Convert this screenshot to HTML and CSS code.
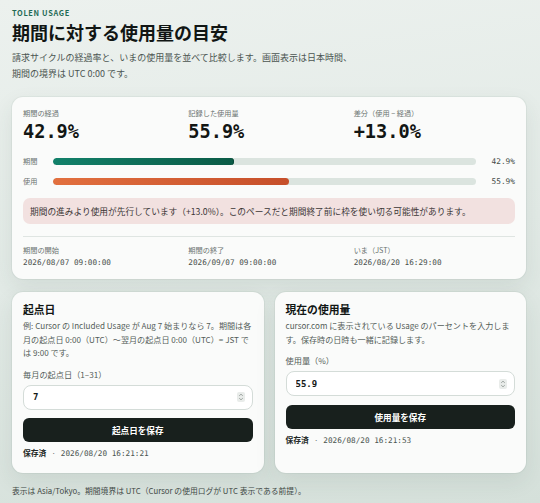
FILE: index.html
```html
<!DOCTYPE html>
<html lang="ja">
<head>
  <meta charset="UTF-8" />
  <meta name="viewport" content="width=device-width, initial-scale=1.0"/>
  <title>Tolen Usage</title>
  <link rel="stylesheet" href="styles.css">
</head>
<body>
  <div class="page">
    <header class="intro">
      <div class="eyebrow">TOLEN USAGE</div>
      <h1>期間に対する使用量の目安</h1>
      <p class="lead">請求サイクルの経過率と、いまの使用量を並べて比較します。画面表示は日本時間、<br>期間の境界は UTC 0:00 です。</p>
    </header>

    <section class="card summary">
      <div class="cols stats">
        <div>
          <div class="label">期間の経過</div>
          <div class="big">42.9%</div>
        </div>
        <div>
          <div class="label">記録した使用量</div>
          <div class="big">55.9%</div>
        </div>
        <div>
          <div class="label">差分（使用 − 経過）</div>
          <div class="big">+13.0%</div>
        </div>
      </div>

      <div class="bars">
        <div class="bar-row">
          <span class="label">期間</span>
          <div class="track"><div class="fill time" style="width: 42.9%"></div></div>
          <span class="pct">42.9%</span>
        </div>
        <div class="bar-row">
          <span class="label">使用</span>
          <div class="track"><div class="fill usage" style="width: 55.9%"></div></div>
          <span class="pct">55.9%</span>
        </div>
      </div>

      <div class="alert">期間の進みより使用が先行しています（+13.0%）。このペースだと期間終了前に枠を使い切る可能性があります。</div>

      <div class="cols meta">
        <div>
          <div class="label">期間の開始</div>
          <div class="mono">2026/08/07 09:00:00</div>
        </div>
        <div>
          <div class="label">期間の終了</div>
          <div class="mono">2026/09/07 09:00:00</div>
        </div>
        <div>
          <div class="label">いま（JST）</div>
          <div class="mono">2026/08/20 16:29:00</div>
        </div>
      </div>
    </section>

    <div class="forms">
      <section class="card form-card">
        <h2>起点日</h2>
        <p class="help">例: Cursor の Included Usage が Aug 7 始まりなら 7。期間は各月の起点日 0:00（UTC）〜翌月の起点日 0:00（UTC）= JST では 9:00 です。</p>
        <label class="field-label" for="startDay">毎月の起点日（1–31）</label>
        <div class="field">
          <input type="number" id="startDay" value="7" min="1" max="31">
          <svg class="spin" viewBox="0 0 8 10"><path d="M2.2 3.8 4 2.2 5.8 3.8M2.2 6.2 4 7.8 5.8 6.2"/></svg>
        </div>
        <button class="btn">起点日を保存</button>
        <div class="saved"><b>保存済</b><span class="dot">·</span><span class="mono">2026/08/20 16:21:21</span></div>
      </section>

      <section class="card form-card">
        <h2>現在の使用量</h2>
        <p class="help">cursor.com に表示されている Usage のパーセントを入力します。保存時の日時も一緒に記録します。</p>
        <label class="field-label" for="usage">使用量（%）</label>
        <div class="field">
          <input type="number" id="usage" value="55.9" step="0.1">
          <svg class="spin" viewBox="0 0 8 10"><path d="M2.2 3.8 4 2.2 5.8 3.8M2.2 6.2 4 7.8 5.8 6.2"/></svg>
        </div>
        <button class="btn">使用量を保存</button>
        <div class="saved"><b>保存済</b><span class="dot">·</span><span class="mono">2026/08/20 16:21:53</span></div>
      </section>
    </div>

    <p class="footnote">表示は Asia/Tokyo。期間境界は UTC（Cursor の使用ログが UTC 表示である前提）。</p>
  </div>
</body>
</html>
```

FILE: styles.css
```css
body {
  margin: 0;
  min-height: 100vh;
  font-family: "Noto Sans CJK JP", "Noto Sans", sans-serif;
  color: #151a18;
  background: linear-gradient(172deg, #ecf1ee 0%, #e2eae6 50%, #d5e0da 100%);
}

.page {
  padding: 8px 14px 0 12px;
}

.eyebrow {
  font-size: 7.4px;
  line-height: 10px;
  font-weight: 700;
  letter-spacing: 0.09em;
  color: #1f6a55;
}

h1 {
  margin: 2px 0 0;
  font-size: 18px;
  line-height: 24px;
  font-weight: 700;
  color: #111614;
}

.lead {
  margin: 6px 0 0;
  font-size: 9px;
  line-height: 16px;
  color: #4b5551;
}

.card {
  background: #fafbfa;
  border-radius: 11px;
  box-shadow: 0 0 0 1px rgba(40, 70, 60, 0.05), 0 8px 22px rgba(40, 70, 60, 0.09);
}

.summary {
  margin-top: 15px;
  padding: 11px 11px 10px;
}

.cols {
  display: grid;
  grid-template-columns: 1fr 1fr 1fr;
  gap: 4px;
}

.label {
  font-size: 7.2px;
  line-height: 11px;
  color: #6a7370;
}

.big {
  margin-top: 2px;
  font-family: "DejaVu Sans Mono", monospace;
  font-size: 18.6px;
  line-height: 22px;
  font-weight: 700;
  color: #121614;
}

.bars {
  margin-top: 8px;
}

.bar-row {
  display: grid;
  grid-template-columns: 30px 1fr 39px;
  align-items: center;
  height: 20px;
}

.track {
  height: 7px;
  border-radius: 4px;
  background: #dbe4df;
  overflow: hidden;
}

.fill {
  height: 100%;
  border-radius: 4px;
}

.fill.time {
  background: linear-gradient(to right, #12816a, #0b5b46);
  box-shadow: inset -1px 0 0 #0a4a39;
}

.fill.usage {
  background: linear-gradient(to right, #e2703f, #c64f2a);
}

.pct {
  text-align: right;
  font-family: "DejaVu Sans Mono", monospace;
  font-size: 7.8px;
  color: #454c49;
}

.alert {
  margin-top: 7px;
  padding: 6.5px 7px;
  font-size: 8.7px;
  line-height: 13px;
  color: #3b3636;
  background: #f2e1e0;
  border-radius: 7px;
}

.meta {
  margin-top: 12px;
  padding-top: 8px;
  border-top: 1px solid #dfe5e2;
}

.mono {
  font-family: "DejaVu Sans Mono", monospace;
  font-size: 7.7px;
  line-height: 12px;
  color: #4a514e;
}

.meta .mono {
  margin-top: 1px;
}

.forms {
  margin-top: 13px;
  display: grid;
  grid-template-columns: 1fr 1fr;
  gap: 11px;
}

.form-card {
  display: flex;
  flex-direction: column;
  padding: 10px 11px 13px;
}

h2 {
  margin: 0;
  font-size: 10.8px;
  line-height: 14px;
  font-weight: 700;
  color: #111614;
}

.help {
  margin: 3px 0 0;
  font-size: 8.1px;
  line-height: 13.5px;
  color: #545d59;
}

.field-label {
  margin-top: 8px;
  font-size: 8.2px;
  line-height: 12px;
  color: #545d59;
}

.field {
  margin-top: 5px;
  height: 25px;
  box-sizing: border-box;
  display: flex;
  align-items: center;
  padding: 0 7px 0 9px;
  background: #fff;
  border: 1px solid #d4dcd8;
  border-radius: 8px;
}

.field input {
  flex: 1;
  min-width: 0;
  border: none;
  outline: none;
  background: transparent;
  padding: 0;
  font-family: "DejaVu Sans Mono", monospace;
  font-size: 9px;
  font-weight: 700;
  color: #151a18;
  -moz-appearance: textfield;
}

.field input::-webkit-inner-spin-button,
.field input::-webkit-outer-spin-button {
  -webkit-appearance: none;
  margin: 0;
}

.spin {
  width: 8px;
  height: 10px;
  background: #e9ecea;
  border-radius: 2px;
  fill: none;
  stroke: #8a928e;
  stroke-width: 0.8;
}

.btn {
  margin-top: 8.5px;
  height: 24px;
  border: none;
  border-radius: 6px;
  background: #18201d;
  color: #fff;
  font-family: inherit;
  font-size: 8.6px;
  font-weight: 700;
  cursor: pointer;
}

.saved {
  margin-top: 5px;
  font-size: 7.8px;
  line-height: 12px;
  color: #3b4340;
}

.saved b {
  color: #222826;
}

.saved .dot {
  margin: 0 5px;
  color: #6b7470;
}

.saved .mono {
  display: inline;
  color: #4b5551;
}

.footnote {
  margin: 12px 0 0;
  font-size: 7.8px;
  line-height: 12px;
  color: #3f4845;
}
```
